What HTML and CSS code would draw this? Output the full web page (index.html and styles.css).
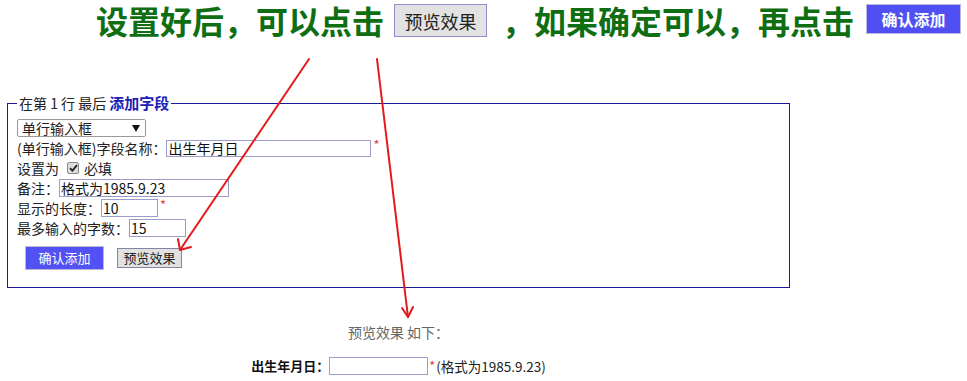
FILE: index.html
```html
<!DOCTYPE html>
<html lang="zh-CN">
<head>
<meta charset="utf-8">
<title>添加字段</title>
<link rel="stylesheet" href="styles.css">
</head>
<body>
<div class="page">
  <div class="title">
    <span class="title-text">设置好后，可以点击</span>
    <span class="shot shot-gray">预览效果</span>
    <span class="title-text title-after">，如果确定可以，再点击</span>
    <span class="shot shot-blue">确认添加</span>
  </div>

  <fieldset class="box">
    <legend class="box-legend">在第 1 行 最后 <b class="legend-strong">添加字段</b></legend>
    <div class="row">
      <div class="select"><span>单行输入框</span><svg class="caret" width="8" height="7" viewBox="0 0 8 7"><path d="M0 0H8L4 7Z" fill="#111"/></svg></div>
    </div>
    <div class="row">(单行输入框)字段名称：<input class="field w-name" type="text" value="出生年月日"><span class="req">*</span></div>
    <div class="row"><span>设置为</span><span class="check"><svg width="9" height="8" viewBox="0 0 9 8"><path d="M1 4.2L3.4 6.6L8 1.2" fill="none" stroke="#222" stroke-width="1.8"/></svg></span><span>必填</span></div>
    <div class="row">备注：<input class="field w-note" type="text" value="格式为1985.9.23"></div>
    <div class="row">显示的长度：<input class="field w-num" type="text" value="10"><span class="req">*</span></div>
    <div class="row">最多输入的字数：<input class="field w-num" type="text" value="15"></div>
    <div class="actions">
      <button class="btn btn-blue" type="button">确认添加</button>
      <button class="btn btn-gray" type="button">预览效果</button>
    </div>
  </fieldset>

  <div class="preview">
    <div class="preview-title">预览效果 如下：</div>
    <div class="preview-row"><b class="preview-label">出生年月日：</b><input class="field w-prev" type="text" value=""><span class="req req-inline">*</span>(格式为1985.9.23)</div>
  </div>

  <svg class="arrows" width="967" height="381" viewBox="0 0 967 381">
    <g fill="none" stroke="#e3191c" stroke-width="2" stroke-linecap="round" stroke-linejoin="round">
      <path d="M309 59L180 250"/>
      <path d="M178 239L180 250L191 247"/>
      <path d="M377 59L408 317"/>
      <path d="M402 308L408 317L413 307"/>
    </g>
  </svg>
</div>
</body>
</html>
```

FILE: styles.css
```css
html, body {
  margin: 0;
  padding: 0;
  background: #fff;
}

body {
  font-family: "Noto Sans CJK SC", "Noto Sans", sans-serif;
  font-size: 14px;
  color: #222;
}

.page {
  position: relative;
  width: 967px;
  height: 381px;
  overflow: hidden;
}

/* ---------- title ---------- */
.title {
  display: flex;
  align-items: center;
  height: 40px;
  padding-left: 96px;
}

.title-text {
  font-size: 32px;
  line-height: 46px;
  font-weight: bold;
  color: #0f6e12;
  white-space: nowrap;
}

.title-after {
  margin-left: 15px;
}

.shot {
  display: inline-flex;
  align-items: center;
  justify-content: center;
  box-sizing: border-box;
  white-space: nowrap;
}

.shot-gray {
  margin-left: 10px;
  width: 93px;
  height: 33px;
  margin-top: 1px;
  background: #e2e2e2;
  border: 1px solid #8e8ec8;
  font-size: 18px;
  color: #222;
}

.shot-blue {
  margin-left: 12px;
  width: 95px;
  height: 30px;
  margin-top: -2px;
  background: #5050f2;
  border: 1px solid #b8b8e0;
  font-size: 16px;
  font-weight: bold;
  color: #fff;
}

/* ---------- fieldset ---------- */
.box {
  margin: 53px 0 0 7px;
  width: 783px;
  box-sizing: border-box;
  border: 1px solid #1a1a96;
  padding: 5px 9px 17px 9px;
}

.box-legend {
  padding: 0 2px;
  font-size: 14px;
  line-height: 20px;
}

.legend-strong {
  font-size: 15px;
  color: #2020b4;
}

.row {
  display: flex;
  align-items: center;
  height: 20px;
  line-height: 20px;
  white-space: pre;
}

.select {
  box-sizing: border-box;
  width: 129px;
  height: 18px;
  border: 1px solid #9a9a9a;
  border-radius: 2px;
  display: flex;
  align-items: center;
  justify-content: space-between;
  padding: 0 5px 0 4px;
  line-height: 16px;
}

.caret {
  display: block;
}

.field {
  box-sizing: border-box;
  height: 18px;
  margin: 0;
  padding: 0 1px;
  border: 1px solid #9b9bcc;
  font-family: "Noto Sans CJK SC", "Noto Sans", sans-serif;
  font-size: 14px;
  line-height: 16px;
  color: #111;
  background: #fff;
  outline: none;
}

.w-name { width: 205px; height: 17px; }
.w-note { width: 170px; }
.w-num  { width: 57px; }
.w-prev { width: 99px; }

.req {
  align-self: flex-start;
  margin-left: 2px;
  color: #e04848;
  font-size: 13px;
  line-height: 14px;
}

.check {
  box-sizing: border-box;
  width: 12px;
  height: 12px;
  margin: 0 5px 0 8px;
  border: 1px solid #8a8a8a;
  border-radius: 2px;
  background: #dcdcdc;
  display: inline-flex;
  align-items: center;
  justify-content: center;
}

.actions {
  display: flex;
  align-items: center;
  gap: 13px;
  margin-top: 8px;
  padding-left: 8px;
}

.btn {
  box-sizing: border-box;
  margin: 0;
  font-family: "Noto Sans CJK SC", "Noto Sans", sans-serif;
  font-size: 13px;
  line-height: 16px;
  padding: 0;
  border-radius: 0;
}

.btn-blue {
  width: 79px;
  height: 24px;
  background: #5252f4;
  border: 1px solid #b9b9cf;
  color: #fff;
}

.btn-gray {
  width: 65px;
  height: 20px;
  background: #e1e1e1;
  border: 1px solid #8383a6;
  color: #222;
}

/* ---------- preview ---------- */
.preview {
  margin-left: 7px;
  width: 783px;
  text-align: center;
}

.preview-title {
  margin-top: 34px;
  line-height: 20px;
  color: #666;
}

.preview-row {
  margin-top: 14px;
  display: flex;
  justify-content: center;
  align-items: center;
  height: 20px;
  line-height: 20px;
  font-size: 13.5px;
  color: #222;
}

.preview-label {
  font-size: 13px;
  color: #111;
}

.req-inline {
  align-self: center;
  margin: 0 1px 0 1px;
  line-height: 20px;
}

/* ---------- annotation arrows ---------- */
.arrows {
  position: absolute;
  left: 0;
  top: 0;
  pointer-events: none;
}
```
